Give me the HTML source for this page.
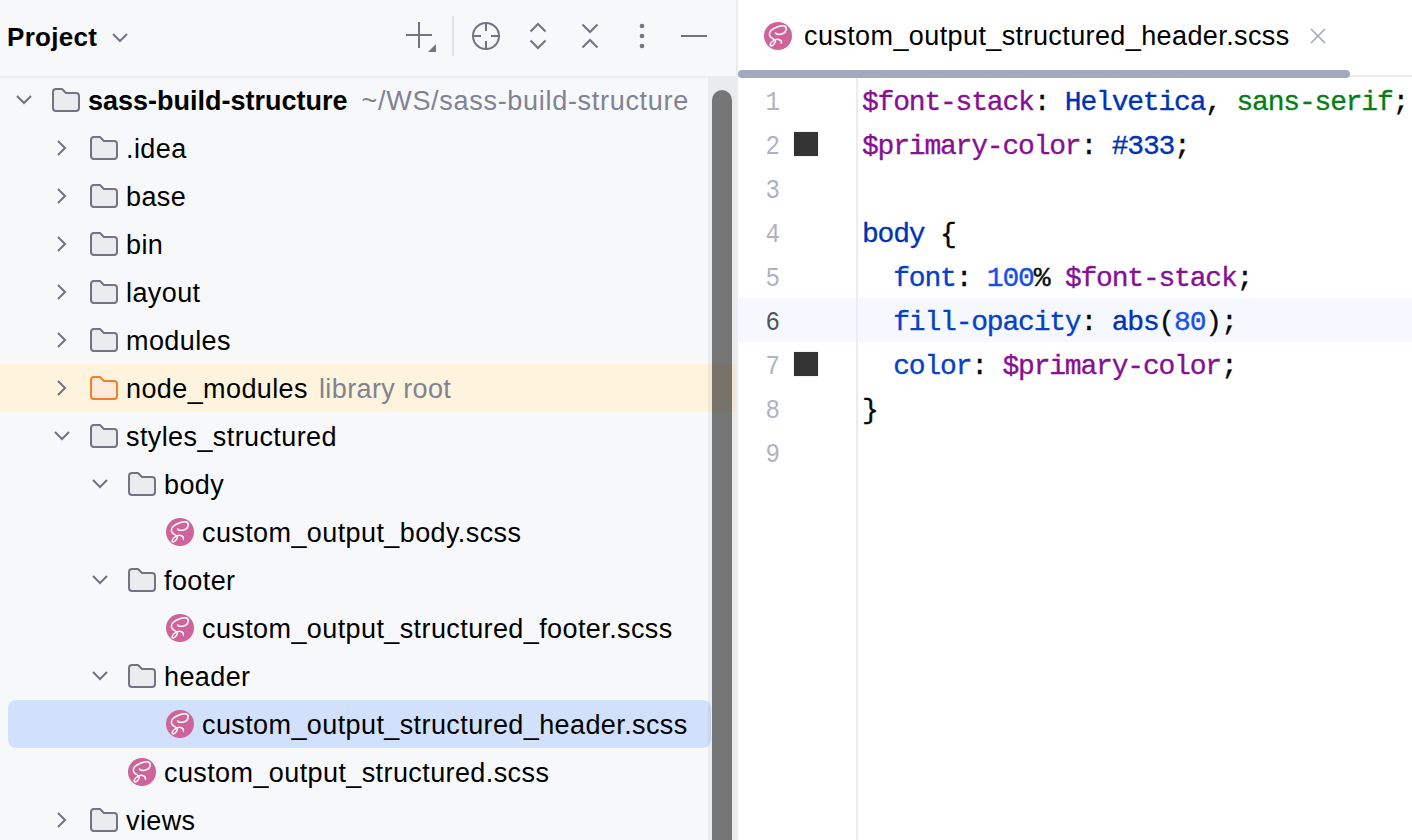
<!DOCTYPE html>
<html><head><meta charset="utf-8">
<style>
*{margin:0;padding:0;box-sizing:border-box}
html,body{width:1412px;height:840px;overflow:hidden;background:#fff}
body{position:relative;font-family:"Liberation Sans",sans-serif;color:#000}
.a{position:absolute}
.tr{position:absolute;height:48px;line-height:48px;font-size:27px;white-space:pre;letter-spacing:0.4px}
.tr .b{font-weight:700;letter-spacing:0;margin-right:14px}
.tr .g{color:#7f8392;margin-left:11px}
.tr .b + .g{margin-left:0;letter-spacing:0.7px}
.code{position:absolute;left:862px;-webkit-text-stroke:0.35px currentColor;font-family:"Liberation Mono",monospace;font-size:28px;letter-spacing:-1.2px;height:44px;line-height:44px;white-space:pre;color:#080808}
.ln{position:absolute;left:740px;width:40px;text-align:right;font-family:"Liberation Mono",monospace;font-size:28px;height:44px;line-height:44px;color:#aeb3c2;transform:scaleX(0.86);transform-origin:100% 50%}
.ln.cur{color:#4f525c}
.p{color:#0641c6}.v{color:#871094}.k{color:#0033b3}.n{color:#1750eb}.s{color:#067d17}
</style></head><body>
<div class="a" style="left:0;top:0;width:738px;height:840px;background:#f7f8fa"></div>
<div class="a" style="left:0;top:76px;width:736px;height:2px;background:#ebecf0"></div>
<div class="a" style="left:736px;top:0;width:2px;height:840px;background:#ebecf0"></div>

<!-- header -->
<div class="a" style="left:7px;top:13px;height:48px;line-height:48px;font-size:26px;font-weight:700;letter-spacing:0.3px">Project</div>
<svg class="a" style="left:108px;top:28px" width="24" height="20" viewBox="0 0 24 20"><path d="M5 6 L12 13 L19 6" fill="none" stroke="#707483" stroke-width="2"/></svg>
<svg class="a" style="left:396px;top:10px" width="320" height="52" viewBox="396 10 320 52">
 <g fill="none" stroke="#707483" stroke-width="2">
  <path d="M406 35 H432 M419 22 V48"/>
  <circle cx="486" cy="36" r="13"/>
  <path d="M486 23 V31 M486 41 V49 M473 36 H481 M491 36 H499"/>
  <path d="M530.5 31.5 L538 24 L545.5 31.5 M530.5 40.5 L538 48 L545.5 40.5"/>
  <path d="M582.5 24.5 L590 32 L597.5 24.5 M582.5 47.5 L590 40 L597.5 47.5"/>
  <path d="M681 36 H707"/>
 </g>
 <path d="M428 52 L436 44 V52 Z" fill="#707483"/>
 <rect x="452" y="16" width="2" height="40" fill="#dfe1e5"/>
 <circle cx="642" cy="26" r="2.3" fill="#707483"/><circle cx="642" cy="36" r="2.3" fill="#707483"/><circle cx="642" cy="46" r="2.3" fill="#707483"/>
</svg>

<svg class="a" style="left:15px;top:94px" width="18" height="12" viewBox="0 0 18 12"><path d="M2 2 L9 9 L16 2" fill="none" stroke="#707483" stroke-width="2"/></svg>
<svg class="a" style="left:52px;top:88px" width="28" height="24" viewBox="0 0 28 24"><path d="M1 4 Q1 1 4 1 H10 L14 5 H24 Q27 5 27 8 V20 Q27 23 24 23 H4 Q1 23 1 20 Z" fill="#ebecf0" stroke="#707483" stroke-width="2" stroke-linejoin="round"/></svg>
<div class="tr" style="left:88px;top:77px"><span class="b">sass-build-structure</span><span class="g">~/WS/sass-build-structure</span></div>
<svg class="a" style="left:56px;top:139px" width="12" height="18" viewBox="0 0 12 18"><path d="M2 2 L9 9 L2 16" fill="none" stroke="#707483" stroke-width="2"/></svg>
<svg class="a" style="left:90px;top:136px" width="28" height="24" viewBox="0 0 28 24"><path d="M1 4 Q1 1 4 1 H10 L14 5 H24 Q27 5 27 8 V20 Q27 23 24 23 H4 Q1 23 1 20 Z" fill="#ebecf0" stroke="#707483" stroke-width="2" stroke-linejoin="round"/></svg>
<div class="tr" style="left:126px;top:125px"><span>.idea</span></div>
<svg class="a" style="left:56px;top:187px" width="12" height="18" viewBox="0 0 12 18"><path d="M2 2 L9 9 L2 16" fill="none" stroke="#707483" stroke-width="2"/></svg>
<svg class="a" style="left:90px;top:184px" width="28" height="24" viewBox="0 0 28 24"><path d="M1 4 Q1 1 4 1 H10 L14 5 H24 Q27 5 27 8 V20 Q27 23 24 23 H4 Q1 23 1 20 Z" fill="#ebecf0" stroke="#707483" stroke-width="2" stroke-linejoin="round"/></svg>
<div class="tr" style="left:126px;top:173px"><span>base</span></div>
<svg class="a" style="left:56px;top:235px" width="12" height="18" viewBox="0 0 12 18"><path d="M2 2 L9 9 L2 16" fill="none" stroke="#707483" stroke-width="2"/></svg>
<svg class="a" style="left:90px;top:232px" width="28" height="24" viewBox="0 0 28 24"><path d="M1 4 Q1 1 4 1 H10 L14 5 H24 Q27 5 27 8 V20 Q27 23 24 23 H4 Q1 23 1 20 Z" fill="#ebecf0" stroke="#707483" stroke-width="2" stroke-linejoin="round"/></svg>
<div class="tr" style="left:126px;top:221px"><span>bin</span></div>
<svg class="a" style="left:56px;top:283px" width="12" height="18" viewBox="0 0 12 18"><path d="M2 2 L9 9 L2 16" fill="none" stroke="#707483" stroke-width="2"/></svg>
<svg class="a" style="left:90px;top:280px" width="28" height="24" viewBox="0 0 28 24"><path d="M1 4 Q1 1 4 1 H10 L14 5 H24 Q27 5 27 8 V20 Q27 23 24 23 H4 Q1 23 1 20 Z" fill="#ebecf0" stroke="#707483" stroke-width="2" stroke-linejoin="round"/></svg>
<div class="tr" style="left:126px;top:269px"><span>layout</span></div>
<svg class="a" style="left:56px;top:331px" width="12" height="18" viewBox="0 0 12 18"><path d="M2 2 L9 9 L2 16" fill="none" stroke="#707483" stroke-width="2"/></svg>
<svg class="a" style="left:90px;top:328px" width="28" height="24" viewBox="0 0 28 24"><path d="M1 4 Q1 1 4 1 H10 L14 5 H24 Q27 5 27 8 V20 Q27 23 24 23 H4 Q1 23 1 20 Z" fill="#ebecf0" stroke="#707483" stroke-width="2" stroke-linejoin="round"/></svg>
<div class="tr" style="left:126px;top:317px"><span>modules</span></div>
<div class="a" style="left:0;top:364px;width:736px;height:48px;background:#fef4de"></div>
<svg class="a" style="left:56px;top:379px" width="12" height="18" viewBox="0 0 12 18"><path d="M2 2 L9 9 L2 16" fill="none" stroke="#707483" stroke-width="2"/></svg>
<svg class="a" style="left:90px;top:376px" width="28" height="24" viewBox="0 0 28 24"><path d="M1 4 Q1 1 4 1 H10 L14 5 H24 Q27 5 27 8 V20 Q27 23 24 23 H4 Q1 23 1 20 Z" fill="#fde9d9" stroke="#f07f30" stroke-width="2" stroke-linejoin="round"/></svg>
<div class="tr" style="left:126px;top:365px"><span>node_modules</span><span class="g">library root</span></div>
<svg class="a" style="left:53px;top:430px" width="18" height="12" viewBox="0 0 18 12"><path d="M2 2 L9 9 L16 2" fill="none" stroke="#707483" stroke-width="2"/></svg>
<svg class="a" style="left:90px;top:424px" width="28" height="24" viewBox="0 0 28 24"><path d="M1 4 Q1 1 4 1 H10 L14 5 H24 Q27 5 27 8 V20 Q27 23 24 23 H4 Q1 23 1 20 Z" fill="#ebecf0" stroke="#707483" stroke-width="2" stroke-linejoin="round"/></svg>
<div class="tr" style="left:126px;top:413px"><span>styles_structured</span></div>
<svg class="a" style="left:91px;top:478px" width="18" height="12" viewBox="0 0 18 12"><path d="M2 2 L9 9 L16 2" fill="none" stroke="#707483" stroke-width="2"/></svg>
<svg class="a" style="left:128px;top:472px" width="28" height="24" viewBox="0 0 28 24"><path d="M1 4 Q1 1 4 1 H10 L14 5 H24 Q27 5 27 8 V20 Q27 23 24 23 H4 Q1 23 1 20 Z" fill="#ebecf0" stroke="#707483" stroke-width="2" stroke-linejoin="round"/></svg>
<div class="tr" style="left:164px;top:461px"><span>body</span></div>
<svg class="a" style="left:166px;top:518px" width="28" height="28" viewBox="0 0 28 28"><circle cx="14" cy="14" r="14" fill="#cf649a"/><path d="M11.5 11.1 C13 12.6 16 12.8 19 11.5 C22.5 10 23.5 5.5 20.5 4 C17.5 2.8 10 5.5 7 8.5 C4.5 11 5 14 7.5 15.8 C9 16.8 11.5 17.8 11.3 19.5 C11 21.5 8.5 24 7 23.9 C5.8 23.8 6 21.5 8 19.8 C9.5 18.4 12 17 14.5 17.4 C16.5 17.8 17.6 19.5 17.4 21.2" fill="none" stroke="#fff" stroke-width="1.5" stroke-linecap="round"/></svg>
<div class="tr" style="left:202px;top:509px"><span>custom_output_body.scss</span></div>
<svg class="a" style="left:91px;top:574px" width="18" height="12" viewBox="0 0 18 12"><path d="M2 2 L9 9 L16 2" fill="none" stroke="#707483" stroke-width="2"/></svg>
<svg class="a" style="left:128px;top:568px" width="28" height="24" viewBox="0 0 28 24"><path d="M1 4 Q1 1 4 1 H10 L14 5 H24 Q27 5 27 8 V20 Q27 23 24 23 H4 Q1 23 1 20 Z" fill="#ebecf0" stroke="#707483" stroke-width="2" stroke-linejoin="round"/></svg>
<div class="tr" style="left:164px;top:557px"><span>footer</span></div>
<svg class="a" style="left:166px;top:614px" width="28" height="28" viewBox="0 0 28 28"><circle cx="14" cy="14" r="14" fill="#cf649a"/><path d="M11.5 11.1 C13 12.6 16 12.8 19 11.5 C22.5 10 23.5 5.5 20.5 4 C17.5 2.8 10 5.5 7 8.5 C4.5 11 5 14 7.5 15.8 C9 16.8 11.5 17.8 11.3 19.5 C11 21.5 8.5 24 7 23.9 C5.8 23.8 6 21.5 8 19.8 C9.5 18.4 12 17 14.5 17.4 C16.5 17.8 17.6 19.5 17.4 21.2" fill="none" stroke="#fff" stroke-width="1.5" stroke-linecap="round"/></svg>
<div class="tr" style="left:202px;top:605px"><span>custom_output_structured_footer.scss</span></div>
<svg class="a" style="left:91px;top:670px" width="18" height="12" viewBox="0 0 18 12"><path d="M2 2 L9 9 L16 2" fill="none" stroke="#707483" stroke-width="2"/></svg>
<svg class="a" style="left:128px;top:664px" width="28" height="24" viewBox="0 0 28 24"><path d="M1 4 Q1 1 4 1 H10 L14 5 H24 Q27 5 27 8 V20 Q27 23 24 23 H4 Q1 23 1 20 Z" fill="#ebecf0" stroke="#707483" stroke-width="2" stroke-linejoin="round"/></svg>
<div class="tr" style="left:164px;top:653px"><span>header</span></div>
<div class="a" style="left:8px;top:700px;width:703px;height:48px;background:#d2e1fb;border-radius:8px"></div>
<svg class="a" style="left:166px;top:710px" width="28" height="28" viewBox="0 0 28 28"><circle cx="14" cy="14" r="14" fill="#cf649a"/><path d="M11.5 11.1 C13 12.6 16 12.8 19 11.5 C22.5 10 23.5 5.5 20.5 4 C17.5 2.8 10 5.5 7 8.5 C4.5 11 5 14 7.5 15.8 C9 16.8 11.5 17.8 11.3 19.5 C11 21.5 8.5 24 7 23.9 C5.8 23.8 6 21.5 8 19.8 C9.5 18.4 12 17 14.5 17.4 C16.5 17.8 17.6 19.5 17.4 21.2" fill="none" stroke="#fff" stroke-width="1.5" stroke-linecap="round"/></svg>
<div class="tr" style="left:202px;top:701px"><span>custom_output_structured_header.scss</span></div>
<svg class="a" style="left:128px;top:758px" width="28" height="28" viewBox="0 0 28 28"><circle cx="14" cy="14" r="14" fill="#cf649a"/><path d="M11.5 11.1 C13 12.6 16 12.8 19 11.5 C22.5 10 23.5 5.5 20.5 4 C17.5 2.8 10 5.5 7 8.5 C4.5 11 5 14 7.5 15.8 C9 16.8 11.5 17.8 11.3 19.5 C11 21.5 8.5 24 7 23.9 C5.8 23.8 6 21.5 8 19.8 C9.5 18.4 12 17 14.5 17.4 C16.5 17.8 17.6 19.5 17.4 21.2" fill="none" stroke="#fff" stroke-width="1.5" stroke-linecap="round"/></svg>
<div class="tr" style="left:164px;top:749px"><span>custom_output_structured.scss</span></div>
<svg class="a" style="left:56px;top:811px" width="12" height="18" viewBox="0 0 12 18"><path d="M2 2 L9 9 L2 16" fill="none" stroke="#707483" stroke-width="2"/></svg>
<svg class="a" style="left:90px;top:808px" width="28" height="24" viewBox="0 0 28 24"><path d="M1 4 Q1 1 4 1 H10 L14 5 H24 Q27 5 27 8 V20 Q27 23 24 23 H4 Q1 23 1 20 Z" fill="#ebecf0" stroke="#707483" stroke-width="2" stroke-linejoin="round"/></svg>
<div class="tr" style="left:126px;top:797px"><span>views</span></div>

<!-- scrollbar -->
<div class="a" style="left:708px;top:78px;width:28px;height:762px;background:rgba(0,0,0,0.05)"></div>
<div class="a" style="left:712px;top:90px;width:20px;height:760px;background:rgba(0,0,0,0.5);border-radius:10px"></div>

<!-- editor tab -->
<svg class="a" style="left:764px;top:22px" width="28" height="28" viewBox="0 0 28 28"><circle cx="14" cy="14" r="14" fill="#cf649a"/><path d="M11.5 11.1 C13 12.6 16 12.8 19 11.5 C22.5 10 23.5 5.5 20.5 4 C17.5 2.8 10 5.5 7 8.5 C4.5 11 5 14 7.5 15.8 C9 16.8 11.5 17.8 11.3 19.5 C11 21.5 8.5 24 7 23.9 C5.8 23.8 6 21.5 8 19.8 C9.5 18.4 12 17 14.5 17.4 C16.5 17.8 17.6 19.5 17.4 21.2" fill="none" stroke="#fff" stroke-width="1.5" stroke-linecap="round"/></svg>
<div class="a" style="left:804px;top:12px;height:48px;line-height:48px;font-size:27px;letter-spacing:0.4px;white-space:pre">custom_output_structured_header.scss</div>
<svg class="a" style="left:1308px;top:26px" width="20" height="20" viewBox="0 0 20 20"><path d="M3 3 L17 17 M17 3 L3 17" stroke="#a8adbd" stroke-width="1.7"/></svg>
<div class="a" style="left:738px;top:75px;width:674px;height:2px;background:#ebecf0"></div>
<div class="a" style="left:738px;top:70px;width:612px;height:8px;background:#a4aabb;border-radius:4px"></div>

<!-- editor -->
<div class="a" style="left:738px;top:298px;width:674px;height:44px;background:#f5f8fe"></div>
<div class="a" style="left:856px;top:78px;width:2px;height:762px;background:#ebecf0"></div>
<div class="a" style="left:794px;top:132px;width:24px;height:24px;background:#333;box-shadow:0 0 1px rgba(0,0,0,.3)"></div>
<div class="a" style="left:794px;top:352px;width:24px;height:24px;background:#333;box-shadow:0 0 1px rgba(0,0,0,.3)"></div>
<div class="ln" style="top:81px">1</div>
<div class="code" style="top:81px"><span class="v">$font-stack</span>: <span class="k">Helvetica</span>, <span class="s">sans-serif</span>;</div>
<div class="ln" style="top:125px">2</div>
<div class="code" style="top:125px"><span class="v">$primary-color</span>: <span class="k">#333</span>;</div>
<div class="ln" style="top:169px">3</div>
<div class="ln" style="top:213px">4</div>
<div class="code" style="top:213px"><span class="k">body</span> {</div>
<div class="ln" style="top:257px">5</div>
<div class="code" style="top:257px">  <span class="p">font</span>: <span class="n">100</span>% <span class="v">$font-stack</span>;</div>
<div class="ln cur" style="top:301px">6</div>
<div class="code" style="top:301px">  <span class="p">fill-opacity</span>: <span class="k">abs</span>(<span class="n">80</span>);</div>
<div class="ln" style="top:345px">7</div>
<div class="code" style="top:345px">  <span class="p">color</span>: <span class="v">$primary-color</span>;</div>
<div class="ln" style="top:389px">8</div>
<div class="code" style="top:389px">}</div>
<div class="ln" style="top:433px">9</div>
</body></html>
